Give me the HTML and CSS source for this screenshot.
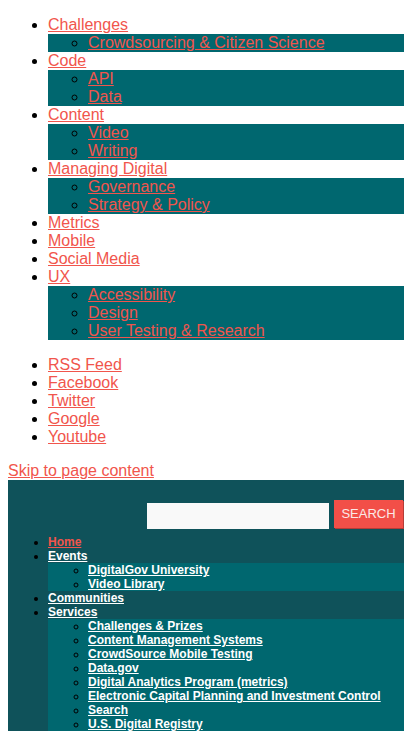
FILE: index.html
```html
<!DOCTYPE html>
<html>
<head>
<meta charset="utf-8">
<title>DigitalGov</title>
<link rel="stylesheet" href="styles.css">
</head>
<body>
<ul class="menu menu-first">
  <li><a href="#">Challenges</a>
    <ul class="sub">
      <li><a href="#">Crowdsourcing &amp; Citizen Science</a></li>
    </ul>
  </li>
  <li><a href="#">Code</a>
    <ul class="sub">
      <li><a href="#">API</a></li>
      <li><a href="#">Data</a></li>
    </ul>
  </li>
  <li><a href="#">Content</a>
    <ul class="sub">
      <li><a href="#">Video</a></li>
      <li><a href="#">Writing</a></li>
    </ul>
  </li>
  <li><a href="#">Managing Digital</a>
    <ul class="sub">
      <li><a href="#">Governance</a></li>
      <li><a href="#">Strategy &amp; Policy</a></li>
    </ul>
  </li>
  <li><a href="#">Metrics</a></li>
  <li><a href="#">Mobile</a></li>
  <li><a href="#">Social Media</a></li>
  <li><a href="#">UX</a>
    <ul class="sub">
      <li><a href="#">Accessibility</a></li>
      <li><a href="#">Design</a></li>
      <li><a href="#">User Testing &amp; Research</a></li>
    </ul>
  </li>
</ul>
<ul class="menu">
  <li><a href="#">RSS Feed</a></li>
  <li><a href="#">Facebook</a></li>
  <li><a href="#">Twitter</a></li>
  <li><a href="#">Google</a></li>
  <li><a href="#">Youtube</a></li>
</ul>
<a class="skip" href="#">Skip to page content</a>
<header class="site-header">
  <form class="search">
    <input class="search-input" type="text" aria-label="Search">
    <button class="search-btn" type="button">SEARCH</button>
  </form>
  <ul class="nav">
    <li><a class="active" href="#">Home</a></li>
    <li><a href="#">Events</a>
      <ul class="nav-sub">
        <li><a href="#">DigitalGov University</a></li>
        <li><a href="#">Video Library</a></li>
      </ul>
    </li>
    <li><a href="#">Communities</a></li>
    <li><a href="#">Services</a>
      <ul class="nav-sub">
        <li><a href="#">Challenges &amp; Prizes</a></li>
        <li><a href="#">Content Management Systems</a></li>
        <li><a href="#">CrowdSource Mobile Testing</a></li>
        <li><a href="#">Data.gov</a></li>
        <li><a href="#">Digital Analytics Program (metrics)</a></li>
        <li><a href="#">Electronic Capital Planning and Investment Control</a></li>
        <li><a href="#">Search</a></li>
        <li><a href="#">U.S. Digital Registry</a></li>
      </ul>
    </li>
  </ul>
</header>
</body>
</html>
```

FILE: styles.css
```css
body {
  margin: 8px;
  background: #ffffff;
  color: #000000;
  font-family: "Liberation Sans", Arial, sans-serif;
  font-size: 16px;
  line-height: 18px;
}

a {
  color: #f1554c;
}

.menu {
  margin: 16px 0;
  padding-left: 40px;
}

.menu-first {
  margin-top: 8px;
}

.sub {
  margin: 0;
  padding-left: 40px;
  background: #00676f;
  list-style: circle;
}

.skip {
  display: block;
  width: max-content;
}

.site-header {
  background: #0f525a;
  padding-top: 20px;
}

.search {
  display: flex;
  justify-content: flex-end;
  align-items: flex-start;
  gap: 5px;
  margin: 0;
}

.search-input {
  box-sizing: border-box;
  width: 182px;
  height: 26px;
  margin-top: 3px;
  border: none;
  padding: 0 6px;
  background: #f9f9f9;
}

.search-btn {
  box-sizing: border-box;
  width: 69px;
  height: 28px;
  margin-right: 1px;
  border: none;
  padding: 0;
  background: #f24f48;
  color: #fbe9e7;
  font-family: "Liberation Sans", Arial, sans-serif;
  font-size: 13px;
  line-height: 28px;
  box-shadow: 1px 1px 0 #b53c37;
}

.nav {
  margin: 6px 0 0;
  padding-left: 40px;
  font-size: 12px;
  line-height: 14px;
  font-weight: bold;
}

.nav a {
  color: #ffffff;
}

.nav a.active {
  color: #f1554c;
}

.nav-sub {
  margin: 0;
  padding-left: 40px;
  background: #00676f;
  list-style: circle;
}
```
